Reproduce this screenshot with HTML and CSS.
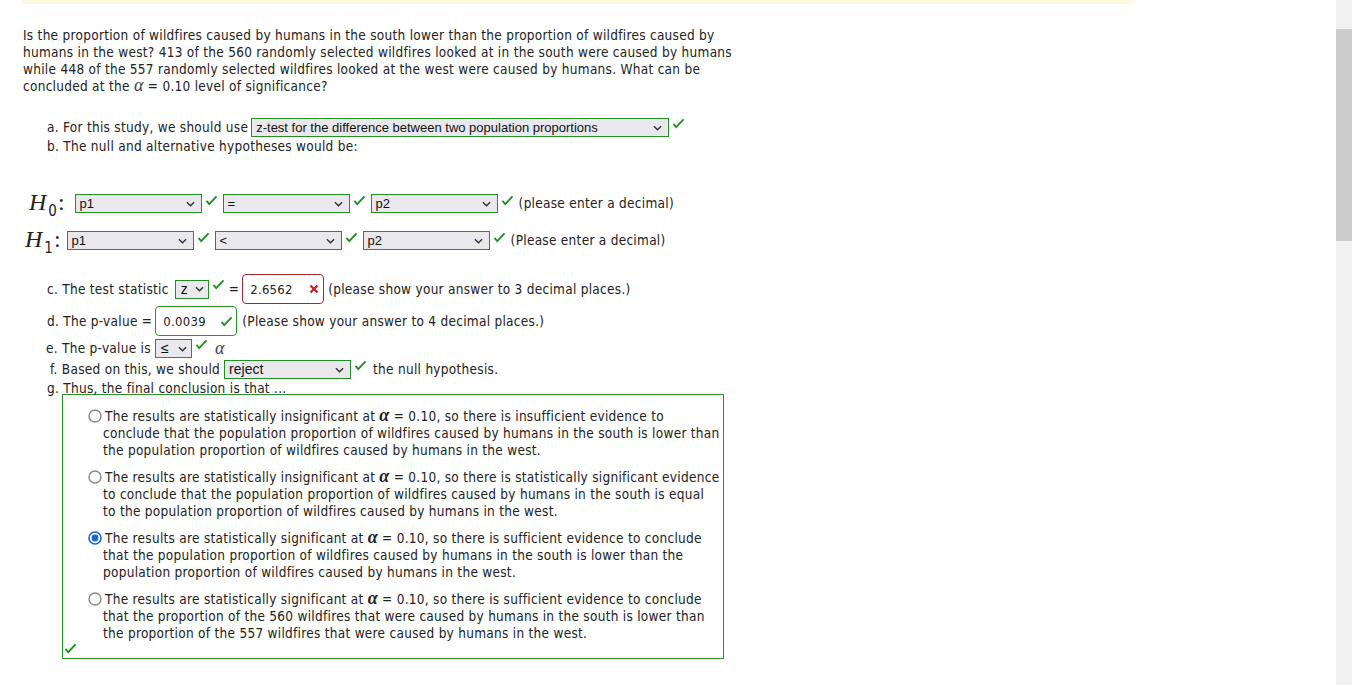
FILE: index.html
```html
<!DOCTYPE html>
<html>
<head>
<meta charset="utf-8">
<link rel="stylesheet" href="styles.css">
</head>
<body>
<div class="page">
  <main class="main">
    <div class="topbar"></div>
    <div class="content">
      <p class="question">Is the proportion of wildfires caused by humans in the south lower than the proportion of wildfires caused by<br>humans in the west? 413 of the 560 randomly selected wildfires looked at in the south were caused by humans<br>while 448 of the 557 randomly selected wildfires looked at the west were caused by humans. What can be<br>concluded at the <span class="alpha-q">α</span> = 0.10 level of significance?</p>

      <div class="row row-a">
        <span class="lbl">a. For this study, we should use</span>
        <span class="sel w-a"><span class="sel-text">z-test for the difference between two population proportions</span><svg class="chev" viewBox="0 0 10 6"><polyline points="1,1 5,5 9,1"/></svg></span>
        <svg class="ok" viewBox="0 0 14 12"><polyline points="1.5,6.5 4.5,10 12.5,1.5"/></svg>
      </div>
      <div class="row row-b"><span class="lbl">b. The null and alternative hypotheses would be:</span></div>

      <div class="row row-h row-h0">
        <span class="hyp"><i>H</i><sub>0</sub>:</span>
        <span class="sel w-h"><span class="sel-text">p1</span><svg class="chev" viewBox="0 0 10 6"><polyline points="1,1 5,5 9,1"/></svg></span>
        <svg class="ok" viewBox="0 0 14 12"><polyline points="1.5,6.5 4.5,10 12.5,1.5"/></svg>
        <span class="sel w-h"><span class="sel-text">=</span><svg class="chev" viewBox="0 0 10 6"><polyline points="1,1 5,5 9,1"/></svg></span>
        <svg class="ok" viewBox="0 0 14 12"><polyline points="1.5,6.5 4.5,10 12.5,1.5"/></svg>
        <span class="sel w-h"><span class="sel-text">p2</span><svg class="chev" viewBox="0 0 10 6"><polyline points="1,1 5,5 9,1"/></svg></span>
        <svg class="ok" viewBox="0 0 14 12"><polyline points="1.5,6.5 4.5,10 12.5,1.5"/></svg>
        <span class="note">(please enter a decimal)</span>
      </div>
      <div class="row row-h row-h1">
        <span class="hyp"><i>H</i><sub>1</sub>:</span>
        <span class="sel w-h"><span class="sel-text">p1</span><svg class="chev" viewBox="0 0 10 6"><polyline points="1,1 5,5 9,1"/></svg></span>
        <svg class="ok" viewBox="0 0 14 12"><polyline points="1.5,6.5 4.5,10 12.5,1.5"/></svg>
        <span class="sel w-h"><span class="sel-text">&lt;</span><svg class="chev" viewBox="0 0 10 6"><polyline points="1,1 5,5 9,1"/></svg></span>
        <svg class="ok" viewBox="0 0 14 12"><polyline points="1.5,6.5 4.5,10 12.5,1.5"/></svg>
        <span class="sel w-h"><span class="sel-text">p2</span><svg class="chev" viewBox="0 0 10 6"><polyline points="1,1 5,5 9,1"/></svg></span>
        <svg class="ok" viewBox="0 0 14 12"><polyline points="1.5,6.5 4.5,10 12.5,1.5"/></svg>
        <span class="note">(Please enter a decimal)</span>
      </div>

      <div class="row row-c">
        <span class="lbl">c. The test statistic</span>
        <span class="sel w-z"><span class="sel-text big">z</span><svg class="chev" viewBox="0 0 10 6"><polyline points="1,1 5,5 9,1"/></svg></span>
        <svg class="ok" viewBox="0 0 14 12"><polyline points="1.5,6.5 4.5,10 12.5,1.5"/></svg>
        <span class="eq">=</span>
        <span class="inp bad"><span class="inp-text">2.6562</span><svg class="xmark" viewBox="0 0 10 10"><path d="M1.5,1.5 L8.5,8.5 M8.5,1.5 L1.5,8.5"/></svg></span>
        <span class="note">(please show your answer to 3 decimal places.)</span>
      </div>
      <div class="row row-d">
        <span class="lbl">d. The p-value =</span>
        <span class="inp good"><span class="inp-text">0.0039</span><svg class="ok inner" viewBox="0 0 14 12"><polyline points="1.5,6.5 4.5,10 12.5,1.5"/></svg></span>
        <span class="note">(Please show your answer to 4 decimal places.)</span>
      </div>
      <div class="row row-e">
        <span class="lbl">e. The p-value is</span>
        <span class="sel w-le"><span class="sel-text big">≤</span><svg class="chev" viewBox="0 0 10 6"><polyline points="1,1 5,5 9,1"/></svg></span>
        <svg class="ok" viewBox="0 0 14 12"><polyline points="1.5,6.5 4.5,10 12.5,1.5"/></svg>
        <span class="alpha-q e-alpha">α</span>
      </div>
      <div class="row row-f">
        <span class="lbl">f. Based on this, we should</span>
        <span class="sel w-h"><span class="sel-text big">reject</span><svg class="chev" viewBox="0 0 10 6"><polyline points="1,1 5,5 9,1"/></svg></span>
        <svg class="ok" viewBox="0 0 14 12"><polyline points="1.5,6.5 4.5,10 12.5,1.5"/></svg>
        <span class="note">the null hypothesis.</span>
      </div>
      <div class="row row-g"><span class="lbl">g. Thus, the final conclusion is that ...</span></div>

      <div class="choices">
        <div class="opt">
          <svg class="radio" viewBox="0 0 14 14"><circle cx="7" cy="7" r="6" class="ring"/></svg>The results are statistically insignificant at <span class="alpha">α</span> = 0.10, so there is insufficient evidence to<br>conclude that the population proportion of wildfires caused by humans in the south is lower than<br>the population proportion of wildfires caused by humans in the west.
        </div>
        <div class="opt">
          <svg class="radio" viewBox="0 0 14 14"><circle cx="7" cy="7" r="6" class="ring"/></svg>The results are statistically insignificant at <span class="alpha">α</span> = 0.10, so there is statistically significant evidence<br>to conclude that the population proportion of wildfires caused by humans in the south is equal<br>to the population proportion of wildfires caused by humans in the west.
        </div>
        <div class="opt">
          <svg class="radio" viewBox="0 0 14 14"><circle cx="7" cy="7" r="6" class="ring on"/><circle cx="7" cy="7" r="3.4" class="dot"/></svg>The results are statistically significant at <span class="alpha">α</span> = 0.10, so there is sufficient evidence to conclude<br>that the population proportion of wildfires caused by humans in the south is lower than the<br>population proportion of wildfires caused by humans in the west.
        </div>
        <div class="opt">
          <svg class="radio" viewBox="0 0 14 14"><circle cx="7" cy="7" r="6" class="ring"/></svg>The results are statistically significant at <span class="alpha">α</span> = 0.10, so there is sufficient evidence to conclude<br>that the proportion of the 560 wildfires that were caused by humans in the south is lower than<br>the proportion of the 557 wildfires that were caused by humans in the west.
        </div>
        <svg class="ok box-ok" viewBox="0 0 14 12"><polyline points="1.5,6.5 4.5,10 12.5,1.5"/></svg>
      </div>
    </div>
  </main>
  <div class="scrollbar"><div class="thumb"></div></div>
</div>
</body>
</html>
```

FILE: styles.css
```css
* { box-sizing: border-box; }
html, body { margin: 0; padding: 0; height: 100%; background: #fff; }
body {
  font-family: "DejaVu Sans Condensed", "DejaVu Sans", sans-serif;
  font-size: 13.5px;
  letter-spacing: 0.28px;
  line-height: 17px;
  color: #222;
}
.page { display: flex; height: 685px; overflow: hidden; }
.main { flex: 1; min-width: 0; }
.scrollbar { width: 16px; background: #f1f1f1; padding-top: 29px; }
.thumb { height: 212px; background: #cdcdcd; }

.topbar { height: 4px; margin-left: 22px; width: 1111px; background: #fef8df; }
.content { padding-left: 23px; }

.question { margin: 23px 0 0 0; }

.row { display: flex; align-items: flex-start; white-space: nowrap; }
.lbl { line-height: 19px; }
.row-a { margin-top: 23px; padding-left: 24px; height: 19px; }
.row-b { padding-left: 24px; height: 18px; }
.row-b .lbl { line-height: 18px; }
.row-h0 { margin-top: 39px; padding-left: 6px; height: 19px; }
.row-h1 { margin-top: 18px; padding-left: 2px; height: 19px; }
.row-c { margin-top: 24px; padding-left: 24px; height: 30px; align-items: center; }
.row-d { margin-top: 2px; padding-left: 24px; height: 30px; align-items: center; }
.row-e { margin-top: 3px; padding-left: 23px; height: 19px; }
.row-f { margin-top: 2px; padding-left: 27px; height: 19px; }
.row-g { margin-top: 1px; padding-left: 24px; height: 14px; }
.row-g .lbl { line-height: 17px; }

.hyp {
  font-family: "Liberation Serif", serif;
  font-size: 24px;
  letter-spacing: 0;
  line-height: 19px;
  margin-right: 6px;
  position: relative;
  top: -1px;
}
.row-h1 .hyp { margin-right: 2px; }
.hyp i { font-style: italic; }
.hyp sub {
  font-family: "DejaVu Sans Condensed", "DejaVu Sans", sans-serif;
  font-size: 15px;
  vertical-align: -6px;
  line-height: 0;
  margin-left: 2px;
  margin-right: 1px;
}

.sel {
  display: inline-flex;
  align-items: center;
  justify-content: space-between;
  height: 19px;
  border: 1px solid #239023;
  background: #e9e9ed;
  padding: 0 6px 0 4px;
  font-family: "Liberation Sans", Arial, sans-serif;
  font-size: 13px;
  letter-spacing: 0;
  color: #111;
  margin-left: 4px;
}
.sel-text { line-height: 17px; }
.sel-text.big { font-size: 14px; }
.chev { width: 9px; height: 6px; fill: none; stroke: #333; stroke-width: 1.6; }
.w-a { width: 418px; margin-left: 3px; }
.w-h { width: 127px; }
.row-h .sel + .ok + .sel { margin-left: 2px; }
.w-z { width: 34px; margin-left: 6px; padding: 0 4px 0 5px; }
.w-le { width: 37px; margin-left: 4px; padding: 0 4px 0 5px; }
.row-f .sel { margin-left: 4px; }

.ok {
  width: 13px; height: 11px;
  fill: none; stroke: #1f8f1f; stroke-width: 2;
  margin: 0 3px 0 3px;
  flex: none;
}
.row-h .ok { margin-top: 1px; }
.row-c .ok { align-self: flex-start; margin-top: 5px; }
.row-e .ok { margin-top: 0; }

.note { line-height: 19px; margin-left: 4px; }
.row-h .note { margin-left: 2px; }
.row-c .note { margin-left: 4px; }
.row-d .note { margin-left: 5px; }
.row-f .note { margin-left: 3px; }

.eq { margin: 0 0 0 1px; }

.inp {
  display: inline-flex;
  align-items: center;
  justify-content: space-between;
  width: 82px;
  height: 30px;
  border-radius: 4px;
  background: #fff;
  padding: 0 3px 0 7px;
}
.inp.bad { border: 1px solid #a52a2a; margin-left: 3px; }
.inp.good { border: 1px solid #2a922a; margin-left: 3px; }
.inp-text { font-size: 13px; }
.xmark { width: 10px; height: 10px; fill: none; stroke: #c0262b; stroke-width: 2.4; margin-right: 1px; }
.ok.inner { margin: 0; }

.alpha-q {
  font-family: "Liberation Serif", serif;
  font-style: italic;
  font-size: 18px;
  line-height: 0;
  color: #444;
}
.e-alpha { margin-left: 4px; line-height: 19px; }

.choices {
  margin-left: 39px;
  width: 662px;
  height: 265px;
  border: 1px solid #2a922a;
  padding: 13px 0 0 40px;
}
.opt {
  text-indent: -15px;
  white-space: nowrap;
  margin-bottom: 10px;
  line-height: 17px;
}
.opt:last-of-type { margin-bottom: 0; }
.radio {
  width: 14px; height: 14px;
  vertical-align: -2px;
  margin-right: 3px;
}
.radio .ring { fill: #fff; stroke: #8a8a8a; stroke-width: 1.4; }
.radio .ring.on { stroke: #1a66d9; stroke-width: 1.6; }
.radio .dot { fill: #1a66d9; }
.alpha {
  font-family: "Liberation Serif", serif;
  font-style: italic;
  font-weight: bold;
  font-size: 18px;
  line-height: 0;
  color: #222;
}
.box-ok { display: block; margin: 1px 0 0 -39px; }
```
